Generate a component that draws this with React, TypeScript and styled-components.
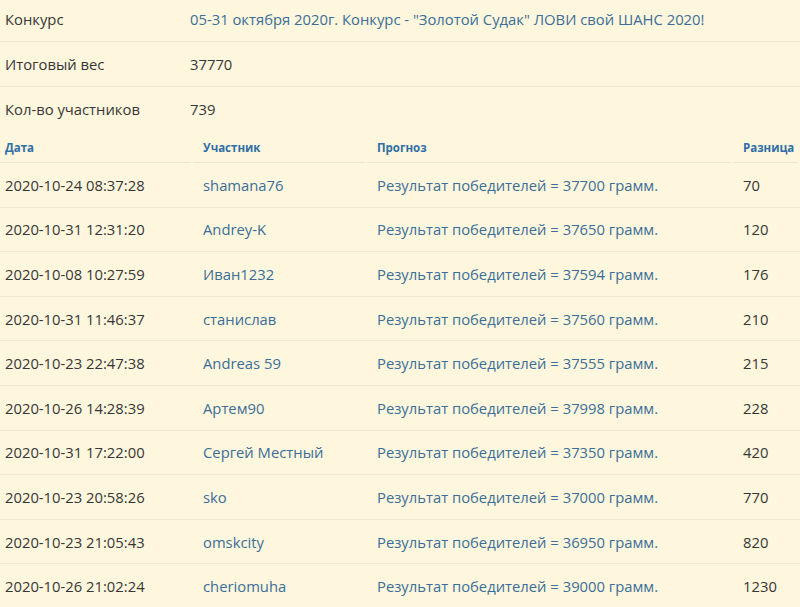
import React from "react";
import styled, { createGlobalStyle } from "styled-components";

const Global = createGlobalStyle`
  html, body { margin: 0; padding: 0; background: #fef7dd; }
  body { font-family: "Open Sans", "Noto Sans", sans-serif; color: #363636; }
`;

const Page = styled.div`
  width: 800px;
  height: 607px;
  overflow: hidden;
  background: #fef7dd;
`;

const InfoList = styled.div`
  display: flex;
  flex-direction: column;
  margin-top: -3px;
`;

const InfoRow = styled.div<{ $border?: boolean }>`
  display: grid;
  grid-template-columns: 190px 1fr;
  align-items: center;
  height: 45px;
  box-sizing: border-box;
  padding-left: 5px;
  border-bottom: 1px solid ${(p) => (p.$border ? "#f4ebcf" : "transparent")};
  font-size: 14.8px;
`;

const Label = styled.span`
  color: #363636;
`;

const Value = styled.span<{ $link?: boolean }>`
  margin-left: -5px;
  color: ${(p) => (p.$link ? "#3b6e98" : "#363636")};
`;

const Table = styled.div`
  display: grid;
  grid-template-columns: 193px 174px 366px 67px;
`;

const Th = styled.div<{ $first?: boolean }>`
  height: 31px;
  box-sizing: border-box;
  display: flex;
  align-items: flex-end;
  padding: 0 0 7px ${(p) => (p.$first ? "5px" : "10px")};
  margin-right: 2px;
  border-bottom: 1px solid #f1e7c9;
  font-size: 11.5px;
  font-weight: 700;
  color: #2f6ea6;
  white-space: nowrap;
`;

const Td = styled.div<{ $first?: boolean; $link?: boolean }>`
  height: 44.6px;
  box-sizing: border-box;
  display: flex;
  align-items: center;
  padding-left: ${(p) => (p.$first ? "5px" : "10px")};
  border-bottom: 1px solid #f4ebcf;
  font-size: 14.8px;
  white-space: nowrap;
  color: ${(p) => (p.$link ? "#3b6e98" : "#363636")};
`;

const rows = [
  ["2020-10-24 08:37:28", "shamana76", "37700", "70"],
  ["2020-10-31 12:31:20", "Andrey-K", "37650", "120"],
  ["2020-10-08 10:27:59", "Иван1232", "37594", "176"],
  ["2020-10-31 11:46:37", "станислав", "37560", "210"],
  ["2020-10-23 22:47:38", "Andreas 59", "37555", "215"],
  ["2020-10-26 14:28:39", "Артем90", "37998", "228"],
  ["2020-10-31 17:22:00", "Сергей Местный", "37350", "420"],
  ["2020-10-23 20:58:26", "sko", "37000", "770"],
  ["2020-10-23 21:05:43", "omskcity", "36950", "820"],
  ["2020-10-26 21:02:24", "cheriomuha", "39000", "1230"],
];

export default function App() {
  return (
    <Page>
      <Global />
      <InfoList>
        <InfoRow $border>
          <Label>Конкурс</Label>
          <Value $link>05-31 октября 2020г. Конкурс - "Золотой Судак" ЛОВИ свой ШАНС 2020!</Value>
        </InfoRow>
        <InfoRow $border>
          <Label>Итоговый вес</Label>
          <Value>37770</Value>
        </InfoRow>
        <InfoRow>
          <Label>Кол-во участников</Label>
          <Value>739</Value>
        </InfoRow>
      </InfoList>
      <Table>
        <Th $first>Дата</Th>
        <Th>Участник</Th>
        <Th>Прогноз</Th>
        <Th>Разница</Th>
        {rows.map((r) => (
          <React.Fragment key={r[0]}>
            <Td $first>{r[0]}</Td>
            <Td $link>{r[1]}</Td>
            <Td $link>Результат победителей = {r[2]} грамм.</Td>
            <Td>{r[3]}</Td>
          </React.Fragment>
        ))}
      </Table>
    </Page>
  );
}
